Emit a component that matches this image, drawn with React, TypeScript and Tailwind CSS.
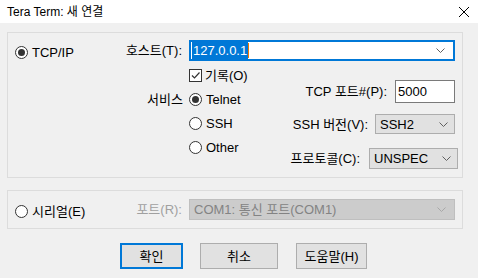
import React from 'react';

const font = { fontFamily: '"Liberation Sans", "Noto Sans CJK KR", sans-serif' };

const Radio: React.FC<{ checked?: boolean; label: string }> = ({ checked, label }) => (
  <div className="flex items-center">
    <span className="flex h-[13px] w-[13px] items-center justify-center rounded-full border border-[#333333] bg-white">
      {checked && <span className="h-[7px] w-[7px] rounded-full bg-[#333333]" />}
    </span>
    <span className="ml-[4px]">{label}</span>
  </div>
);

const Chevron: React.FC<{ color?: string }> = ({ color = '#606060' }) => (
  <svg width="9" height="5" viewBox="0 0 9 5" className="shrink-0">
    <path d="M0.5 0.5 L4.5 4.5 L8.5 0.5" fill="none" stroke={color} strokeWidth="1" />
  </svg>
);

const Select: React.FC<{ value: string; className: string }> = ({ value, className }) => (
  <div className={`flex items-center justify-between border border-[#adadad] bg-[#e1e1e1] pl-[4px] pr-[6px] ${className}`}>
    <span>{value}</span>
    <Chevron />
  </div>
);

export default function App() {
  return (
    <div className="flex h-[278px] w-[478px] flex-col bg-[#f0f0f0] text-[13px] leading-none text-black" style={font}>
      {/* title bar */}
      <div className="flex h-[23px] items-center justify-between bg-white pl-[7px] pr-[8px]">
        <span className="text-[12px]">Tera Term: 새 연결</span>
        <svg width="12" height="12" viewBox="0 0 12 12">
          <path d="M1 1 L11 11 M11 1 L1 11" stroke="#000" strokeWidth="1" />
        </svg>
      </div>

      {/* TCP/IP group */}
      <div className="ml-[7px] mt-[9px] flex h-[146px] w-[456px] flex-col border border-[#dcdcdc] pt-[7px]">
        <div className="flex items-center">
          <div className="flex w-[181px] items-center justify-between pl-[7px] pr-[7px]">
            <div className="mt-[3px]">
              <Radio checked label="TCP/IP" />
            </div>
            <span>호스트(T):</span>
          </div>
          <div className="flex h-[21px] w-[266px] items-center justify-between border-2 border-[#0078d7] bg-white pl-[1px] pr-[8px]">
            <div className="flex items-center">
              <span className="bg-[#0078d7] px-[1px] py-[2px] text-white">127.0.0.1</span>
              <span className="h-[15px] w-[1px] bg-[#f07800]" />
            </div>
            <Chevron />
          </div>
        </div>

        <div className="flex">
          <div className="flex w-[181px] justify-end pr-[6px] pt-[26px]">
            <div className="flex h-[24px] items-center">서비스</div>
          </div>
          <div className="flex w-[98px] flex-col pt-[2px]">
            <div className="flex h-[24px] items-center">
              <span className="flex h-[13px] w-[13px] items-center justify-center border border-[#333333] bg-white">
                <svg width="11" height="11" viewBox="0 0 11 11">
                  <path d="M2 5.5 L4.5 8 L9.5 2.5" fill="none" stroke="#333" strokeWidth="1.2" />
                </svg>
              </span>
              <span className="ml-[3px]">기록(O)</span>
            </div>
            <div className="flex h-[24px] items-center">
              <Radio checked label="Telnet" />
            </div>
            <div className="flex h-[24px] items-center">
              <Radio label="SSH" />
            </div>
            <div className="flex h-[24px] items-center">
              <Radio label="Other" />
            </div>
          </div>
          <div className="flex flex-1 flex-col pt-[19px]">
            <div className="mr-[7px] flex items-center justify-end">
              <span className="mr-[8px]">TCP 포트#(P):</span>
              <div className="flex h-[23px] w-[60px] items-center border border-[#7a7a7a] bg-white pl-[2px]">5000</div>
            </div>
            <div className="mr-[7px] mt-[11px] flex items-center justify-end">
              <span className="mr-[7px]">SSH 버전(V):</span>
              <Select value="SSH2" className="h-[20px] w-[80px]" />
            </div>
            <div className="mr-[4px] mt-[14px] flex items-center justify-end">
              <span className="mr-[9px]">프로토콜(C):</span>
              <Select value="UNSPEC" className="h-[21px] w-[89px]" />
            </div>
          </div>
        </div>
      </div>

      {/* Serial group */}
      <div className="ml-[7px] mt-[12px] flex h-[39px] w-[456px] items-center border border-[#dcdcdc]">
        <div className="flex w-[181px] items-center justify-between pl-[7px] pr-[7px]">
          <div className="mt-[3px]">
            <Radio label="시리얼(E)" />
          </div>
          <span className="text-[#a0a0a0]">포트(R):</span>
        </div>
        <div className="flex h-[21px] w-[266px] items-center justify-between border border-[#bfbfbf] bg-[#cccccc] pl-[4px] pr-[8px] text-[#838383]">
          <span>COM1: 통신 포트(COM1)</span>
          <Chevron color="#a8a8a8" />
        </div>
      </div>

      {/* buttons */}
      <div className="mt-[14px] flex pl-[120px]">
        <button className="flex h-[26px] w-[63px] items-center justify-center border-2 border-[#0078d7] bg-[#e1e1e1]">확인</button>
        <button className="ml-[17px] flex h-[26px] w-[78px] items-center justify-center border border-[#adadad] bg-[#e1e1e1]">취소</button>
        <button className="ml-[18px] flex h-[26px] w-[71px] items-center justify-center border border-[#adadad] bg-[#e1e1e1]">도움말(H)</button>
      </div>
    </div>
  );
}
